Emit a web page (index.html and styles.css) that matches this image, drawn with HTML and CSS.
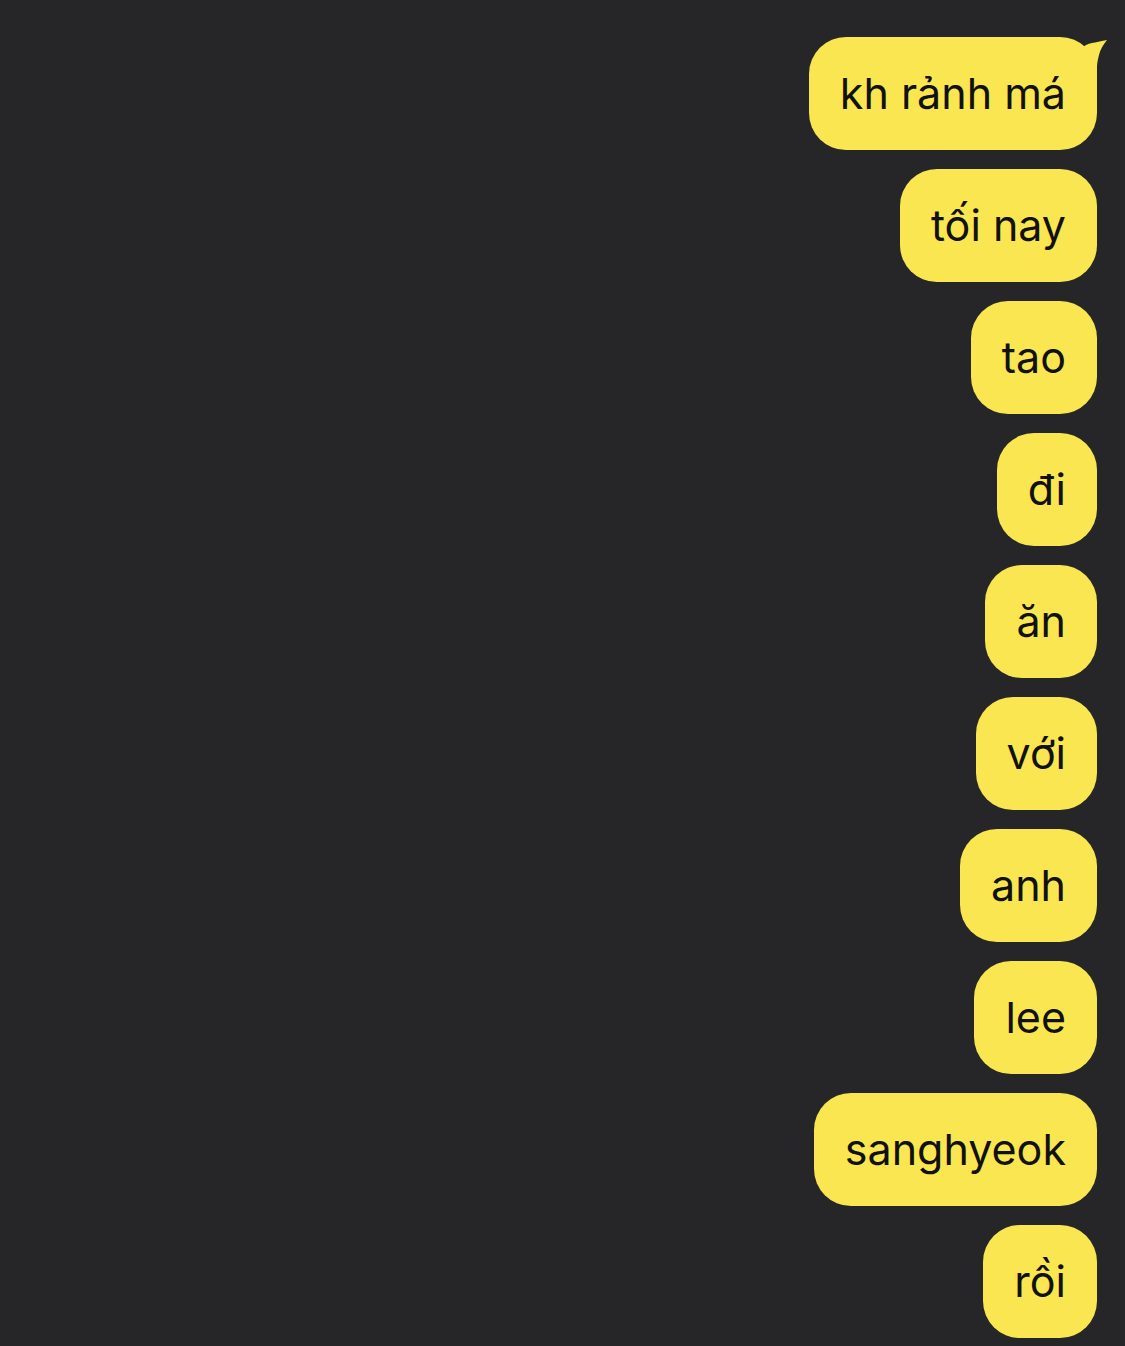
FILE: index.html
```html
<!DOCTYPE html>
<html lang="vi">
<head>
    <meta charset="UTF-8">
    <meta name="viewport" content="width=device-width, initial-scale=1.0">
    <title>Chat</title>
    <link rel="stylesheet" href="styles.css">
</head>
<body>
    <div class="chat">
        <div class="bubble first">
            kh rảnh má
            <svg class="tail" viewBox="0 0 40 50" width="40" height="50">
                <path d="M14 10 C18 7 22 6 26 5.5 C31 4.5 35 3.5 38 3 C34 8 31 13 30 18 C29 22 28 26 28 30 L28 45 L14 45 Z" fill="#fae650"/>
            </svg>
        </div>
        <div class="bubble">tối nay</div>
        <div class="bubble">tao</div>
        <div class="bubble">đi</div>
        <div class="bubble">ăn</div>
        <div class="bubble">với</div>
        <div class="bubble">anh</div>
        <div class="bubble">lee</div>
        <div class="bubble">sanghyeok</div>
        <div class="bubble">rồi</div>
    </div>
</body>
</html>
```

FILE: styles.css
```css
body {
    margin: 0;
    background-color: #262628;
    font-family: Inter, Roboto, "Noto Sans", sans-serif;
}
.chat {
    display: flex;
    flex-direction: column;
    align-items: flex-end;
    gap: 19px;
    padding: 37px 28px 0 0;
}
.bubble {
    position: relative;
    background-color: #fae650;
    color: #111;
    font-size: 43px;
    line-height: 51px;
    padding: 31px 31px 31px 31px;
    border-radius: 37px;
}
.tail {
    position: absolute;
    right: -12px;
    top: 0;
}
```
